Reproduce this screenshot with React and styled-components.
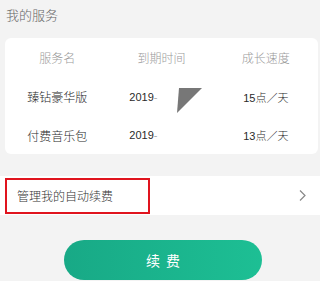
import { Fragment } from 'react';
import styled, { createGlobalStyle } from 'styled-components';

const GlobalStyle = createGlobalStyle`
  body {
    margin: 0;
    background: #f3f3f3;
    font-family: "Noto Sans CJK SC", "Noto Sans", sans-serif;
  }
`;

const Page = styled.div`
  width: 320px;
  height: 281px;
  overflow: hidden;
  background: #f3f3f3;
`;

const Title = styled.div`
  padding: 5px 0 13px 6px;
  font-size: 13px;
  line-height: 20px;
  color: #666;
  font-weight: 300;
`;

const Card = styled.div`
  position: relative;
  margin: 0 2px 0 5px;
  background: #fff;
  border-radius: 6px;
  display: grid;
  grid-template-columns: repeat(3, 1fr);
  grid-template-rows: 39px 39px 38px;
`;

const Cell = styled.div`
  display: flex;
  align-items: center;
  justify-content: ${props => (props.$left ? 'flex-start' : 'center')};
  padding-left: ${props => (props.$left ? '20px' : '0')};
  font-size: ${props => props.$size || 12}px;
  font-weight: 300;
  color: ${props => (props.$head ? '#9a9a9a' : '#2a2a2a')};
  font-family: "Liberation Sans", "Noto Sans CJK SC", sans-serif;
`;

const Dash = styled.span`
  color: #aaa;
`;

const Redaction = styled.svg`
  position: absolute;
  left: 170px;
  top: 50px;
`;

const ManageRow = styled.div`
  margin-top: 22px;
  height: 39px;
  background: #fff;
  display: flex;
  align-items: center;
  justify-content: space-between;
  padding: 0 14px 0 5px;
`;

const Highlight = styled.div`
  box-sizing: border-box;
  width: 145px;
  height: 36px;
  border: 2px solid #e0141e;
  display: flex;
  align-items: center;
  padding-left: 10px;
  font-size: 12px;
  font-weight: 300;
  color: #333;
`;

const Chevron = styled.svg`
  display: block;
`;

const RenewButton = styled.button`
  display: block;
  margin: 25px 0 0 64px;
  width: 198px;
  height: 40px;
  border: none;
  border-radius: 20px;
  background: linear-gradient(90deg, #18a986, #1dbf94);
  color: #fff;
  font-family: "Noto Sans CJK SC", sans-serif;
  font-size: 14px;
  letter-spacing: 6px;
  text-indent: 6px;
  cursor: pointer;
`;

const services = [
  { name: '臻钻豪华版', speed: '15点／天' },
  { name: '付费音乐包', speed: '13点／天' },
];

export default function App() {
  return (
    <Page>
      <GlobalStyle />
      <Title>我的服务</Title>
      <Card>
        <Cell $head>服务名</Cell>
        <Cell $head>到期时间</Cell>
        <Cell $head>成长速度</Cell>
        {services.map(s => (
          <Fragment key={s.name}>
            <Cell>{s.name}</Cell>
            <Cell $left $size={11}>
              2019<Dash>-</Dash>
            </Cell>
            <Cell $size={11}>{s.speed}</Cell>
          </Fragment>
        ))}
        <Redaction width="30" height="27" viewBox="0 0 30 27">
          <polygon points="4,0 27,0 2,25" fill="#777" />
        </Redaction>
      </Card>
      <ManageRow>
        <Highlight>管理我的自动续费</Highlight>
        <Chevron width="7" height="11" viewBox="0 0 7 11">
          <polyline points="1,0.5 6,5.5 1,10.5" fill="none" stroke="#888" strokeWidth="1.2" />
        </Chevron>
      </ManageRow>
      <RenewButton>续费</RenewButton>
    </Page>
  );
}
